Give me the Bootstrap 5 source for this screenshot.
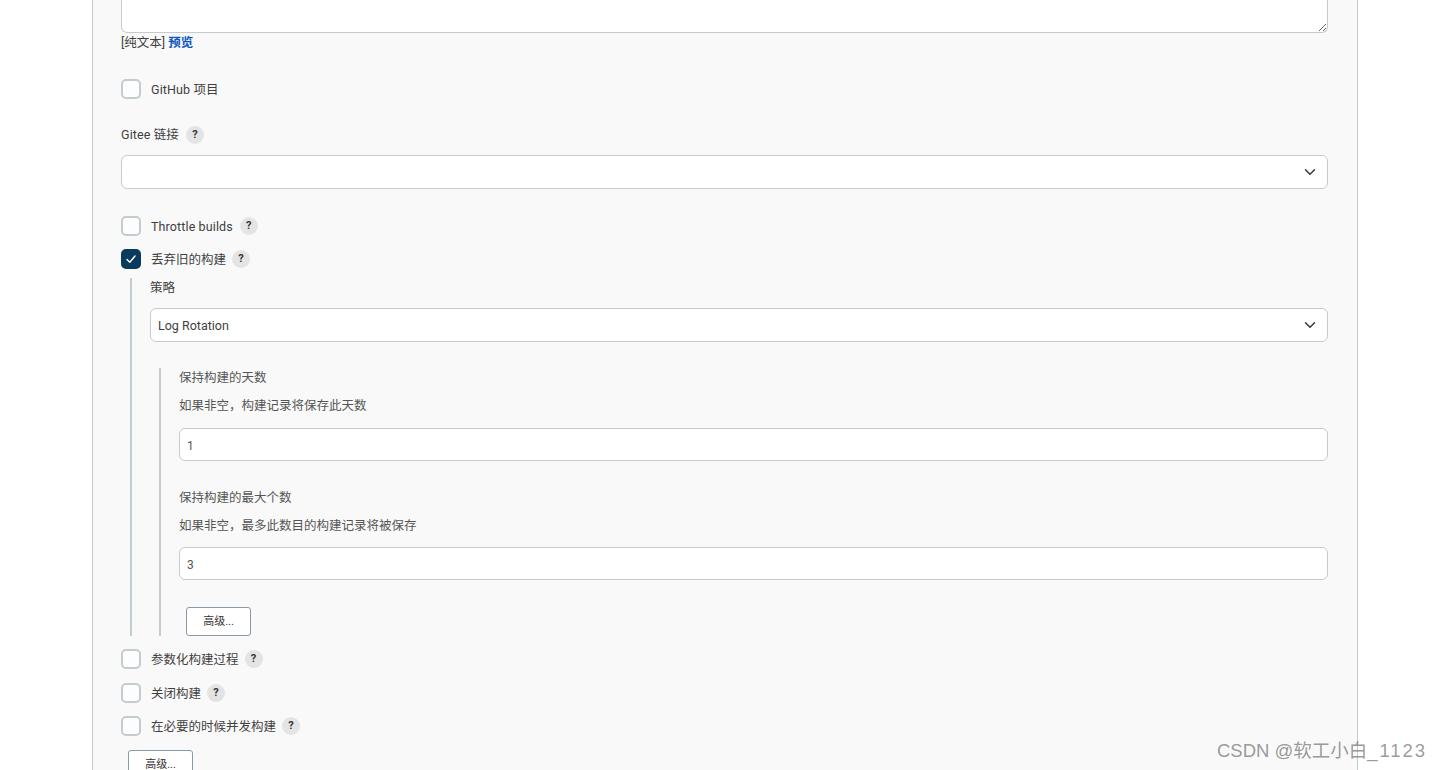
<!DOCTYPE html>
<html lang="zh-CN">
<head>
<meta charset="utf-8">
<title>Jenkins 配置</title>
<link rel="stylesheet" href="https://cdn.jsdelivr.net/npm/bootstrap@5.3.0/dist/css/bootstrap.min.css">
<style>
html, body { height: 770px; overflow: hidden; background: #fff; }
body { font-family: Roboto, "Noto Sans CJK SC", sans-serif; font-size: 12.5px; color: #3f3f3f; position: relative; }
.cfg-panel { width: 1266px; height: 770px; margin-left: 92px; background: #f9f9f9; border: solid #c3ccd1; border-width: 0 1px; padding-left: 28px; padding-right: 29px; overflow: hidden; }
.cfg-area.form-control { display: block; height: 33px; min-height: 0; border: 1px solid #c3ccd1; border-top: 0; border-radius: 0 0 6px 6px; background: #fff; padding: 0; box-shadow: none; }
.cfg-fmt { height: 18px; line-height: 20px; color: #3f3f3f; }
.cfg-fmt a { color: #0b57c2; font-weight: 700; text-decoration: none; }
.cfg-check { height: 20px; line-height: 20px; gap: 6px; }
.cfg-check .form-check-input { width: 20px; height: 20px; margin: 0 4px 0 0; flex: none; background-color: #fdfdfd; border: 2px solid #c3ccd1; border-radius: 5px; }
.cfg-check .form-check-input:checked { background-color: #0a3a5c; border-color: #0a3a5c; background-size: 12px; background-image: url("data:image/svg+xml,%3csvg xmlns='http://www.w3.org/2000/svg' viewBox='0 0 12 12'%3e%3cpath fill='none' stroke='%23fff' stroke-width='1.4' stroke-linecap='round' stroke-linejoin='round' d='M2 6.5l2.8 2.8L10 3'/%3e%3c/svg%3e"); }
.cfg-help { width: 18px; height: 18px; flex: none; border-radius: 50%; background: #e4e4e4; color: #333; font-size: 11px; font-weight: 700; line-height: 18px; text-align: center; }
.cfg-text { padding-top: 2px; }
.cfg-latin { letter-spacing: .12px; margin-right: 1px; }
.cfg-label { height: 18px; line-height: 18px; gap: 6px; }
.cfg-select.form-select { height: 34px; padding: 2px 30px 0 7px; font-size: 12.5px; line-height: 30px; color: #3f3f3f; border: 1px solid #c3ccd1; border-radius: 6px; background-color: #fff; background-position: right 9px center; background-size: 16px 12px; box-shadow: none; }
.cfg-input.form-control { height: 33px; min-height: 0; padding: 2px 7px 0; font-size: 12px; color: #555; border: 1px solid #c3ccd1; border-radius: 6px; background: #fff; box-shadow: none; }
.cfg-sub { border-left: 2px solid #c3ccd1; }
.cfg-sub-one { margin-left: 9px; padding-left: 18px; height: 358px; margin-top: 9px; }
.cfg-sub-two { margin-left: 9px; padding-left: 18px; height: 268px; margin-top: 26px; }
.cfg-desc { height: 18px; line-height: 20px; color: #555; }
.cfg-more.btn { width: 65px; height: 29px; padding: 0; font-size: 11px; line-height: 27px; color: #333; background: #fff; border: 1px solid #8a9aa6; border-radius: 3px; }
.cfg-mark { position: absolute; left: 1217px; top: 739px; font-family: "Liberation Sans", "Noto Sans CJK SC", sans-serif; font-size: 18.5px; line-height: 24px; color: rgba(90, 90, 90, .62); white-space: nowrap; }
.cfg-mark-tail { letter-spacing: 1.9px; }
</style>
</head>
<body>
<div class="cfg-panel">
  <textarea class="form-control cfg-area" aria-label="描述"></textarea>
  <div class="cfg-fmt">[纯文本] <a href="#">预览</a></div>

  <div class="d-flex align-items-center cfg-check" style="margin-top:28px">
    <input class="form-check-input" type="checkbox" aria-label="GitHub 项目"><span class="cfg-text cfg-latin">GitHub 项目</span>
  </div>

  <div class="d-flex align-items-center cfg-label" style="margin-top:27px"><span class="cfg-latin">Gitee 链接</span><span class="cfg-help">?</span></div>
  <select class="form-select cfg-select" style="margin-top:11px" aria-label="Gitee 链接"><option></option></select>

  <div class="d-flex align-items-center cfg-check" style="margin-top:27px">
    <input class="form-check-input" type="checkbox" aria-label="Throttle builds"><span class="cfg-text cfg-latin">Throttle builds</span><span class="cfg-help">?</span>
  </div>
  <div class="d-flex align-items-center cfg-check" style="margin-top:13px">
    <input class="form-check-input" type="checkbox" checked aria-label="丢弃旧的构建"><span class="cfg-text">丢弃旧的构建</span><span class="cfg-help">?</span>
  </div>

  <div class="cfg-sub cfg-sub-one">
    <div class="cfg-desc" style="color:#3f3f3f">策略</div>
    <select class="form-select cfg-select" style="margin-top:12px" aria-label="策略"><option>Log Rotation</option></select>
    <div class="cfg-sub cfg-sub-two">
      <div class="cfg-desc">保持构建的天数</div>
      <div class="cfg-desc" style="margin-top:10px">如果非空，构建记录将保存此天数</div>
      <input class="form-control cfg-input" style="margin-top:14px" value="1" aria-label="保持构建的天数">
      <div class="cfg-desc" style="margin-top:27px">保持构建的最大个数</div>
      <div class="cfg-desc" style="margin-top:10px">如果非空，最多此数目的构建记录将被保存</div>
      <input class="form-control cfg-input" style="margin-top:13px" value="3" aria-label="保持构建的最大个数">
      <button type="button" class="btn cfg-more d-block" style="margin:27px 0 0 7px">高级...</button>
    </div>
  </div>

  <div class="d-flex align-items-center cfg-check" style="margin-top:13px">
    <input class="form-check-input" type="checkbox" aria-label="参数化构建过程"><span class="cfg-text">参数化构建过程</span><span class="cfg-help">?</span>
  </div>
  <div class="d-flex align-items-center cfg-check" style="margin-top:14px">
    <input class="form-check-input" type="checkbox" aria-label="关闭构建"><span class="cfg-text">关闭构建</span><span class="cfg-help">?</span>
  </div>
  <div class="d-flex align-items-center cfg-check" style="margin-top:13px">
    <input class="form-check-input" type="checkbox" aria-label="在必要的时候并发构建"><span class="cfg-text">在必要的时候并发构建</span><span class="cfg-help">?</span>
  </div>
  <button type="button" class="btn cfg-more d-block" style="margin:14px 0 0 7px">高级...</button>
</div>
<div class="cfg-mark">CSDN @软工小白<span class="cfg-mark-tail">_1123</span></div>
<script src="https://cdn.jsdelivr.net/npm/bootstrap@5.3.0/dist/js/bootstrap.bundle.min.js"></script>
</body>
</html>
